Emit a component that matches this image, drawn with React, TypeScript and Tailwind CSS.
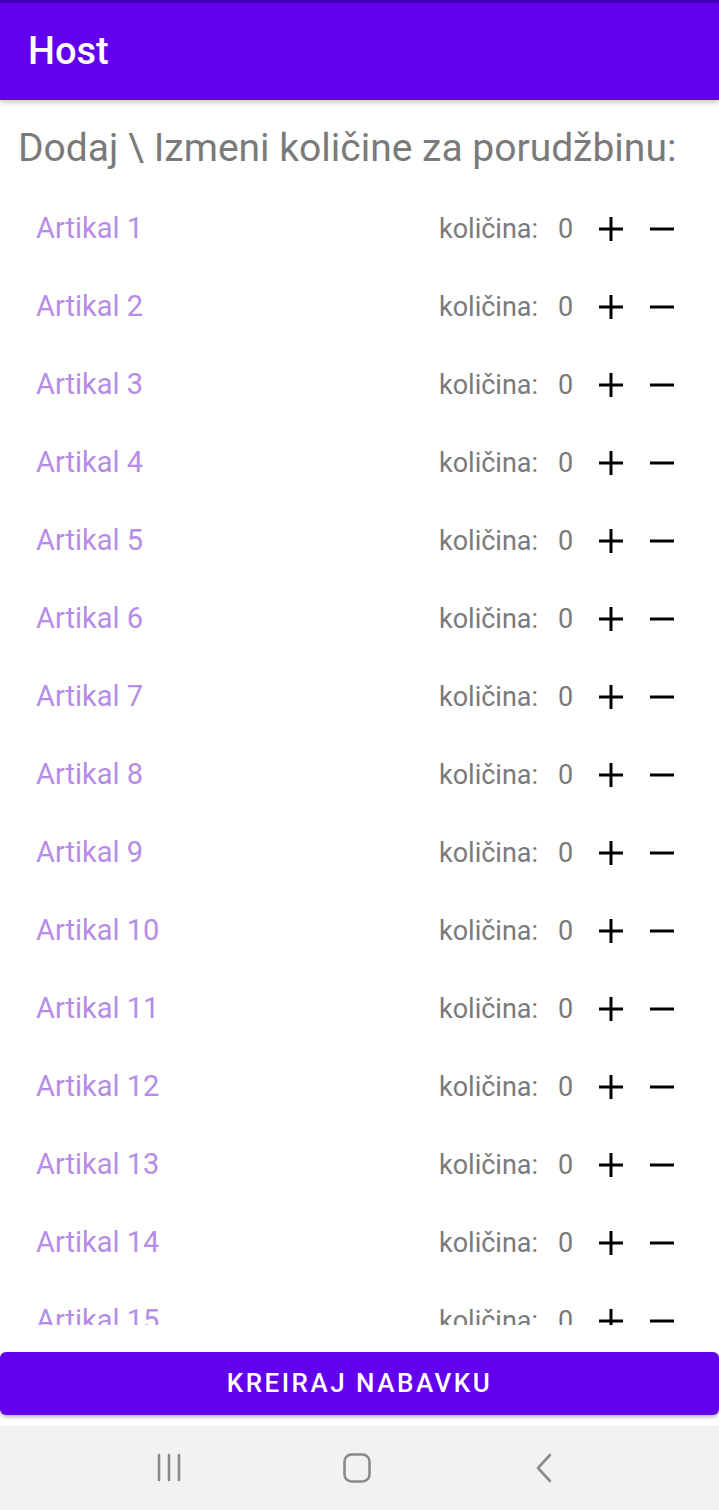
import React from "react";

const items = Array.from({ length: 15 }, (_, i) => `Artikal ${i + 1}`);

const PlusIcon = () => (
  <svg width="26" height="26" viewBox="0 0 26 26">
    <path d="M13 1v24M1 13h24" stroke="#000" strokeWidth="3" />
  </svg>
);

const MinusIcon = () => (
  <svg width="26" height="26" viewBox="0 0 26 26">
    <path d="M1 13h24" stroke="#000" strokeWidth="3" />
  </svg>
);

const Row = ({ name }: { name: string }) => (
  <div className="flex h-[78px] shrink-0 items-center">
    <span className="pl-[36px] text-[29px] text-[#b58ce8]">{name}</span>
    <div className="ml-auto flex items-center pr-[44px] text-[27px] text-[#7a7a7a]">
      <span className="w-[119px]">količina:</span>
      <span className="w-[40px]">0</span>
      <PlusIcon />
      <span className="w-[25px]" />
      <MinusIcon />
    </div>
  </div>
);

export default function App() {
  return (
    <div
      className="flex h-[1510px] w-[719px] flex-col overflow-hidden bg-white"
      style={{ fontFamily: "Roboto, 'Noto Sans', sans-serif" }}
    >
      {/* toolbar */}
      <header className="relative z-10 flex h-[100px] shrink-0 items-center border-t-[3px] border-[#3f00b8] bg-[#6200ee] pl-[28px] shadow-[0_3px_5px_rgba(0,0,0,0.2)]">
        <h1 className="text-[38px] font-medium text-white">Host</h1>
      </header>

      {/* scroll area */}
      <div className="flex h-[1225px] shrink-0 flex-col overflow-hidden">
        <div className="flex h-[90px] shrink-0 items-center pl-[18px] pt-[6px]">
          <p className="text-[39px] text-[#7a7a7a]">Dodaj \ Izmeni količine za porudžbinu:</p>
        </div>
        {items.map((name) => (
          <Row key={name} name={name} />
        ))}
      </div>

      <div className="mt-[27px] px-0">
        <button className="flex h-[63px] w-full items-center justify-center rounded-[6px] bg-[#6200ee] text-[26px] font-medium tracking-[2.5px] text-white shadow-[0_2px_4px_rgba(0,0,0,0.3)]">
          KREIRAJ NABAVKU
        </button>
      </div>

      {/* nav bar */}
      <nav className="mt-[11px] flex h-[84px] shrink-0 items-center bg-[#f2f2f2]">
        <div className="relative h-full w-full">
          <svg className="absolute left-[156px] top-[27px]" width="28" height="30" viewBox="0 0 28 30">
            <path d="M3 2v25M13 2v25M23 2v25" stroke="#8a8a8a" strokeWidth="2.6" strokeLinecap="round" />
          </svg>
          <svg className="absolute left-[342px] top-[26px]" width="32" height="32" viewBox="0 0 32 32">
            <rect x="2.5" y="2.5" width="25" height="27" rx="7" fill="none" stroke="#8a8a8a" strokeWidth="2.6" />
          </svg>
          <svg className="absolute left-[533px] top-[27px]" width="22" height="30" viewBox="0 0 22 30">
            <path d="M17 2L5 15l12 13" fill="none" stroke="#8a8a8a" strokeWidth="2.6" strokeLinecap="round" strokeLinejoin="round" />
          </svg>
        </div>
      </nav>
    </div>
  );
}
